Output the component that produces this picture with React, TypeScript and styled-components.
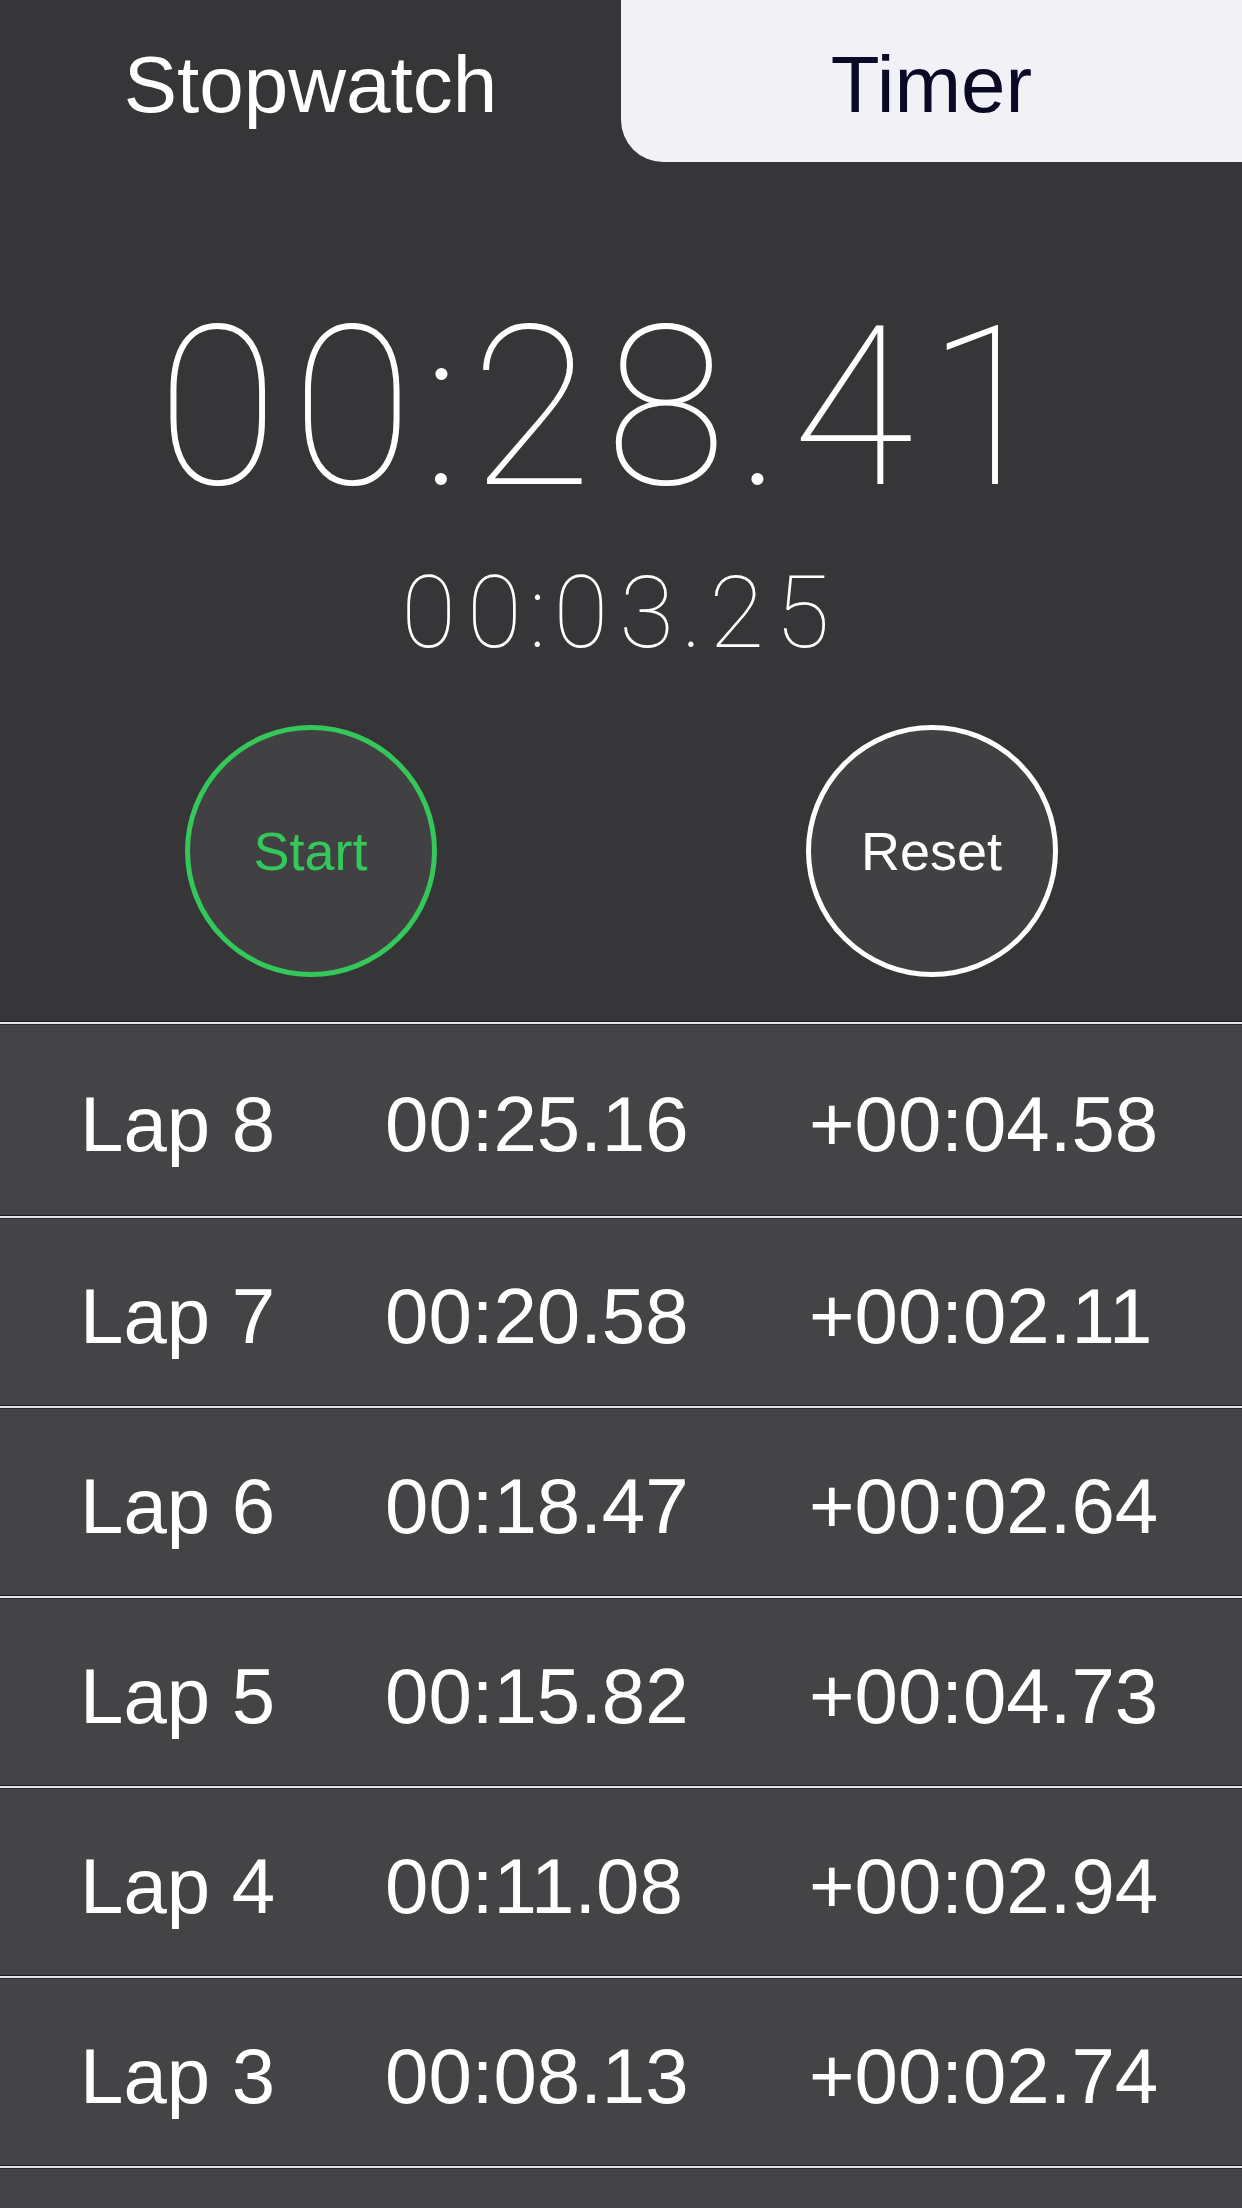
import React from "react";
import styled, { createGlobalStyle } from "styled-components";

const GlobalStyle = createGlobalStyle`
  html, body {
    margin: 0;
    padding: 0;
    background: #363538;
  }
  body {
    width: 1242px;
    height: 2208px;
    overflow: hidden;
  }
  #root {
    width: 1242px;
    height: 2208px;
  }
`;

const Screen = styled.div`
  width: 1242px;
  height: 2208px;
  overflow: hidden;
  background: #363538;
  display: flex;
  flex-direction: column;
  font-family: "Liberation Sans", Arial, sans-serif;
`;

const Tabs = styled.div`
  display: grid;
  grid-template-columns: 621px 621px;
  height: 162px;
  flex: none;
`;

const Tab = styled.div<{ $active?: boolean }>`
  display: flex;
  align-items: center;
  justify-content: center;
  box-sizing: border-box;
  padding-top: 8px;
  font-size: 80px;
  line-height: 1;
  color: ${(p) => (p.$active ? "#ffffff" : "#0b0a26")};
  background: ${(p) => (p.$active ? "transparent" : "#f2f1f6")};
  border-bottom-left-radius: ${(p) => (p.$active ? "0" : "42px")};
`;

const MainTime = styled.div`
  margin-top: 135px;
  padding-right: 24px;
  text-align: center;
  font-family: Roboto, "Liberation Sans", sans-serif;
  font-weight: 100;
  font-size: 222px;
  letter-spacing: 13px;
  line-height: 1;
  color: #ffffff;
  flex: none;
`;

const LapTime = styled.div`
  margin-top: 44px;
  text-align: center;
  font-family: Roboto, "Liberation Sans", sans-serif;
  font-weight: 100;
  font-size: 100px;
  letter-spacing: 11px;
  line-height: 1;
  color: #ffffff;
  flex: none;
`;

const Sep = styled.span<{ $pull: number }>`
  margin-left: ${(p) => -p.$pull}px;
  margin-right: ${(p) => -p.$pull}px;
`;

const Controls = styled.div`
  margin-top: 62px;
  display: grid;
  grid-template-columns: 621px 621px;
  height: 252px;
  flex: none;
`;

const ControlCell = styled.div`
  display: flex;
  align-items: center;
  justify-content: center;
`;

const RoundButton = styled.button<{ $tone: "green" | "white" }>`
  width: 252px;
  height: 252px;
  border-radius: 50%;
  box-sizing: border-box;
  border: 5px solid ${(p) => (p.$tone === "green" ? "#34c759" : "#ffffff")};
  background: #414043;
  color: ${(p) => (p.$tone === "green" ? "#34c759" : "#ffffff")};
  font-family: "Liberation Sans", Arial, sans-serif;
  font-size: 54px;
  line-height: 1;
  padding: 0;
  display: flex;
  align-items: center;
  justify-content: center;
`;

const LapList = styled.div`
  margin-top: 44px;
  flex: 1;
  background: #444346;
  display: flex;
  flex-direction: column;
`;

const Divider = styled.div`
  height: 4px;
  flex: none;
  background: linear-gradient(
    to bottom,
    #1d1c1f 0px,
    #1d1c1f 1px,
    #e4e4e8 1px,
    #e4e4e8 3px,
    #2a292c 3px
  );
`;

const LapRow = styled.div<{ $first?: boolean }>`
  height: ${(p) => (p.$first ? "190px" : "186px")};
  flex: none;
  box-sizing: border-box;
  padding: 8px 0 0 80px;
  display: grid;
  grid-template-columns: 305px 424px 1fr;
  align-items: center;
  font-size: 78px;
  line-height: 1;
  color: #ffffff;
`;

const Cell = styled.span`
  white-space: nowrap;
`;

const laps = [
  ["Lap 8", "00:25.16", "+00:04.58"],
  ["Lap 7", "00:20.58", "+00:02.11"],
  ["Lap 6", "00:18.47", "+00:02.64"],
  ["Lap 5", "00:15.82", "+00:04.73"],
  ["Lap 4", "00:11.08", "+00:02.94"],
  ["Lap 3", "00:08.13", "+00:02.74"],
];

function Clock({ value, pull }: { value: string; pull: number }) {
  const parts = value.split(/([:.])/);
  return (
    <>
      {parts.map((part, i) =>
        part === ":" || part === "." ? (
          <Sep key={i} $pull={pull}>
            {part}
          </Sep>
        ) : (
          <React.Fragment key={i}>{part}</React.Fragment>
        )
      )}
    </>
  );
}

export default function App() {
  return (
    <>
      <GlobalStyle />
      <Screen>
        <Tabs>
          <Tab $active>Stopwatch</Tab>
          <Tab>Timer</Tab>
        </Tabs>
        <MainTime>
          <Clock value="00:28.41" pull={4} />
        </MainTime>
        <LapTime>
          <Clock value="00:03.25" pull={4} />
        </LapTime>
        <Controls>
          <ControlCell>
            <RoundButton $tone="green">Start</RoundButton>
          </ControlCell>
          <ControlCell>
            <RoundButton $tone="white">Reset</RoundButton>
          </ControlCell>
        </Controls>
        <LapList>
          {laps.map(([name, total, delta], i) => (
            <React.Fragment key={name}>
              <Divider />
              <LapRow $first={i === 0}>
                <Cell>{name}</Cell>
                <Cell>{total}</Cell>
                <Cell>{delta}</Cell>
              </LapRow>
            </React.Fragment>
          ))}
          <Divider />
        </LapList>
      </Screen>
    </>
  );
}
